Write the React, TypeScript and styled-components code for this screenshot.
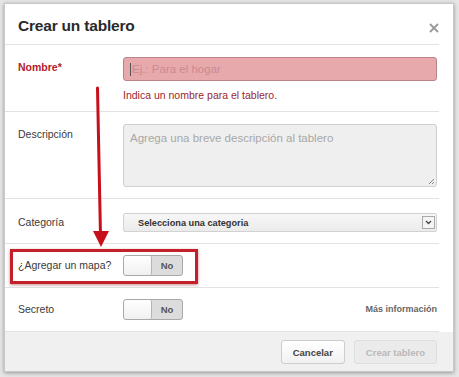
import React from 'react';
import styled, { createGlobalStyle } from 'styled-components';

const Global = createGlobalStyle`
  html, body { margin: 0; padding: 0; }
  body {
    background: #e6e6e6;
    font-family: "Liberation Sans", Arial, sans-serif;
    width: 459px;
    height: 377px;
    overflow: hidden;
  }
`;

const Page = styled.div`
  position: relative;
  width: 459px;
  height: 377px;
  padding: 3px 0 0 4px;
  box-sizing: border-box;
`;

const Modal = styled.div`
  width: 450px;
  height: 369px;
  background: #fff;
  border: 1px solid #c8c8c8;
  box-sizing: border-box;
  box-shadow: 0 1px 4px rgba(0, 0, 0, 0.35);
  display: flex;
  flex-direction: column;
`;

const Header = styled.div`
  height: 41px;
  margin-right: 14px;
  padding: 4px 0 0 13px;
  border-bottom: 1px solid #e2e2e2;
  display: flex;
  align-items: center;
  justify-content: space-between;
  box-sizing: border-box;
`;

const Title = styled.h1`
  margin: 0;
  font-size: 15.5px;
  font-weight: bold;
  color: #2a2a2a;
  letter-spacing: -0.2px;
`;

const Close = styled.svg`
  width: 10px;
  height: 10px;
  margin-right: 0;
  margin-top: 3px;
`;

const Row = styled.div<{ $h: number; $top: number }>`
  height: ${(p) => p.$h}px;
  margin-right: 14px;
  padding: ${(p) => p.$top}px 0 0 13px;
  border-bottom: 1px solid #e2e2e2;
  display: flex;
  align-items: flex-start;
  box-sizing: border-box;
`;

const Label = styled.div<{ $error?: boolean; $lh?: number }>`
  width: 105px;
  flex: none;
  font-size: 10.5px;
  line-height: ${(p) => p.$lh ?? 20}px;
  color: ${(p) => (p.$error ? '#b3202c' : '#3a3a3a')};
  font-weight: ${(p) => (p.$error ? 'bold' : 'normal')};
`;

const Field = styled.div`
  flex: 1;
  display: flex;
  flex-direction: column;
  margin-right: 2px;
`;

const ErrorInput = styled.div`
  height: 24px;
  background: #e8a9ac;
  border: 1px solid #b9858a;
  border-radius: 3px;
  box-sizing: border-box;
  display: flex;
  align-items: center;
  padding-left: 6px;
  font-size: 11.5px;
  color: #c88b90;
`;

const Caret = styled.span`
  width: 1px;
  height: 13px;
  background: #555;
  margin-right: 1px;
`;

const ErrorText = styled.div`
  margin-top: 8px;
  font-size: 10.5px;
  color: #9c1f2e;
`;

const TextArea = styled.div`
  position: relative;
  height: 63px;
  background: #efefef;
  border: 1px solid #cfcfcf;
  border-radius: 3px;
  box-sizing: border-box;
  padding: 7px 6px;
  font-size: 11.5px;
  color: #a8a8a8;
`;

const Grip = styled.svg`
  position: absolute;
  right: 1px;
  bottom: 1px;
  width: 7px;
  height: 7px;
`;

const Select = styled.div`
  height: 19px;
  background: linear-gradient(#f7f7f7, #ebebeb);
  border: 1px solid #d2d2d2;
  border-radius: 2px;
  box-sizing: border-box;
  display: flex;
  align-items: center;
  justify-content: space-between;
  padding: 0 1px 0 14px;
  font-size: 9.2px;
  font-weight: bold;
  color: #333;
`;

const SelectArrow = styled.div`
  width: 13px;
  height: 13px;
  border: 1px solid #a9a9a9;
  background: #f4f4f4;
  box-sizing: border-box;
  display: flex;
  align-items: center;
  justify-content: center;
`;

const Toggle = styled.div`
  width: 60px;
  height: 21px;
  border: 1px solid #a9a9a9;
  border-radius: 3px;
  box-sizing: border-box;
  display: flex;
  overflow: hidden;
  background: #dcdcdc;
`;

const Knob = styled.div`
  width: 27px;
  background: linear-gradient(#ffffff, #f0f0f0);
  border-right: 1px solid #b5b5b5;
  border-radius: 2px;
`;

const ToggleText = styled.div`
  flex: 1;
  display: flex;
  align-items: center;
  justify-content: center;
  font-size: 9.5px;
  font-weight: bold;
  color: #555;
`;

const MoreInfo = styled.div`
  margin-left: auto;
  margin-right: 2px;
  line-height: 20px;
  font-size: 9px;
  font-weight: bold;
  color: #666;
`;

const Footer = styled.div`
  flex: 1;
  background: #f0f0f0;
  display: flex;
  justify-content: flex-end;
  align-items: flex-start;
  gap: 9px;
  padding: 8px 16px 0 0;
`;

const Button = styled.div<{ $disabled?: boolean }>`
  height: 24px;
  padding: 0 11px;
  border: 1px solid ${(p) => (p.$disabled ? '#dedede' : '#cdcdcd')};
  border-radius: 3px;
  box-sizing: border-box;
  background: ${(p) => (p.$disabled ? '#ebebeb' : 'linear-gradient(#ffffff, #f1f1f1)')};
  color: ${(p) => (p.$disabled ? '#b9b9b9' : '#444')};
  font-size: 9.5px;
  font-weight: bold;
  display: flex;
  align-items: center;
`;

const Highlight = styled.div`
  position: absolute;
  left: 10px;
  top: 249px;
  width: 188px;
  height: 35px;
  border: 3px solid #c3202b;
  box-sizing: border-box;
  box-shadow: 0 1px 3px rgba(120, 0, 0, 0.45);
  pointer-events: none;
`;

const Arrow = styled.svg`
  position: absolute;
  left: 0;
  top: 0;
  width: 459px;
  height: 377px;
  pointer-events: none;
`;

export default function App() {
  return (
    <Page>
      <Global />
      <Modal>
        <Header>
          <Title>Crear un tablero</Title>
          <Close viewBox="0 0 10 10">
            <path d="M1 1 L9 9 M9 1 L1 9" stroke="#9a9a9a" strokeWidth="1.8" />
          </Close>
        </Header>

        <Row $h={67} $top={12}>
          <Label $error>Nombre*</Label>
          <Field>
            <ErrorInput>
              <Caret />
              Ej.: Para el hogar
            </ErrorInput>
            <ErrorText>Indica un nombre para el tablero.</ErrorText>
          </Field>
        </Row>

        <Row $h={87} $top={12}>
          <Label>Descripción</Label>
          <Field>
            <TextArea>
              Agrega una breve descripción al tablero
              <Grip viewBox="0 0 7 7">
                <path d="M6 1 L1 6 M6 4 L4 6" stroke="#888" strokeWidth="1" />
              </Grip>
            </TextArea>
          </Field>
        </Row>

        <Row $h={45} $top={14}>
          <Label $lh={19}>Categoría</Label>
          <Field>
            <Select>
              Selecciona una categoria
              <SelectArrow>
                <svg width="7" height="5" viewBox="0 0 7 5">
                  <path d="M1 1 L3.5 3.5 L6 1" stroke="#444" strokeWidth="1.3" fill="none" />
                </svg>
              </SelectArrow>
            </Select>
          </Field>
        </Row>

        <Row $h={44} $top={11}>
          <Label>¿Agregar un mapa?</Label>
          <Toggle>
            <Knob />
            <ToggleText>No</ToggleText>
          </Toggle>
        </Row>

        <Row $h={44} $top={11}>
          <Label>Secreto</Label>
          <Toggle>
            <Knob />
            <ToggleText>No</ToggleText>
          </Toggle>
          <MoreInfo>Más información</MoreInfo>
        </Row>

        <Footer>
          <Button>Cancelar</Button>
          <Button $disabled>Crear tablero</Button>
        </Footer>
      </Modal>

      <Highlight />
      <Arrow viewBox="0 0 459 377">
        <path d="M97.5 88 L100.5 236" stroke="#c8101c" strokeWidth="3" strokeLinecap="round" />
        <path d="M93 231 L109 231 L101 247 Z" fill="#c8101c" />
      </Arrow>
    </Page>
  );
}
